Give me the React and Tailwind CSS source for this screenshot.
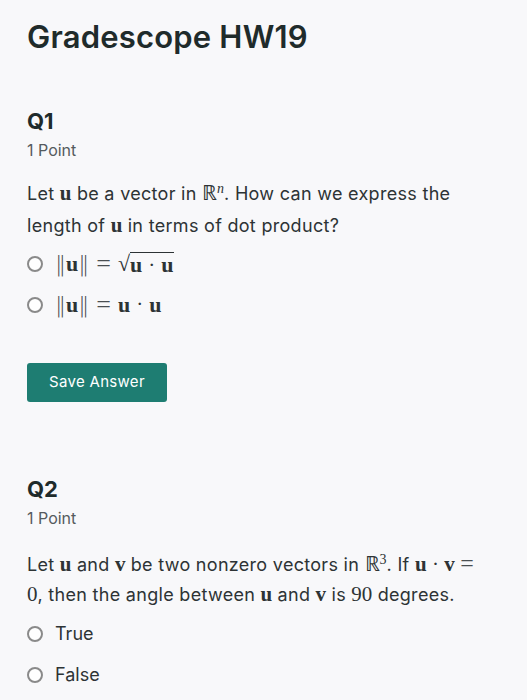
import React from 'react';

const sans = { fontFamily: 'Inter, "Open Sans", sans-serif' };

function B({ children, className = '' }) {
  return <span className={`font-['Liberation_Serif',serif] font-bold text-[21px] leading-none tracking-normal ${className}`}>{children}</span>;
}

function M({ children, className = '' }) {
  return <span className={`font-['Liberation_Serif',serif] text-[21px] leading-none tracking-normal ${className}`}>{children}</span>;
}

function Norm() {
  return (
    <span className="inline-flex items-center">
      <span className="font-['DejaVu_Sans',sans-serif] text-[22px] font-light text-[#4a4f52] leading-none">‖</span>
      <B className="text-[22px]">u</B>
      <span className="font-['DejaVu_Sans',sans-serif] text-[22px] font-light text-[#4a4f52] leading-none">‖</span>
    </span>
  );
}

function Radio({ children }) {
  return (
    <label className="flex items-center gap-[12px] h-[41px]">
      <span className="w-[16px] h-[16px] rounded-full border-2 border-[#8a8a8a] bg-white shrink-0" />
      <span className="leading-none flex items-center">{children}</span>
    </label>
  );
}

function Question({ num, children }) {
  return (
    <div>
      <h2 className="text-[22px] font-bold leading-[30px] text-[#1f2b2b]">{num}</h2>
      <p className="text-[16px] leading-[22px] text-[#555b5e] mt-[3px]">1 Point</p>
      {children}
    </div>
  );
}

export default function App() {
  return (
    <div className="min-h-[700px] bg-[#f8f8fa] px-[27px] pt-[17px] text-[#2d3335]" style={sans}>
      <h1 className="text-[31px] leading-[40px] font-semibold text-[#1f2b2b] tracking-[0.2px]">Gradescope HW19</h1>

      <div className="mt-[49px]">
        <Question num="Q1">
          <p className="mt-[17px] text-[18px] leading-[32px] tracking-[0.3px]">
            Let <B>u</B> be a vector in <M>ℝ<sup className="italic text-[14px]">n</sup></M>. How can we express the
            <br />
            length of <B>u</B> in terms of dot product?
          </p>
          <div className="mt-[1px] text-[18px]">
            <Radio>
              <Norm />
              <M className="mx-[7px] text-[26px] font-light text-[#4a4f52]">=</M>
              <M className="text-[22px]">√</M>
              <span className="border-t border-[#2d3335] pt-[1px] leading-none">
                <B className="text-[22px]">u</B>
                <M className="mx-[6px]">·</M>
                <B className="text-[22px]">u</B>
              </span>
            </Radio>
            <Radio>
              <Norm />
              <M className="mx-[7px] text-[26px] font-light text-[#4a4f52]">=</M>
              <B className="text-[22px]">u</B>
              <M className="mx-[6px]">·</M>
              <B className="text-[22px]">u</B>
            </Radio>
          </div>
          <button className="mt-[38px] w-[140px] h-[39px] rounded-[3px] bg-[#1e7d72] text-white text-[15px] tracking-[0.3px]">
            Save Answer
          </button>
        </Question>
      </div>

      <div className="mt-[72px]">
        <Question num="Q2">
          <p className="mt-[21px] text-[18px] leading-[30px] tracking-[0.3px]">
            Let <B>u</B> and <B>v</B> be two nonzero vectors in <M>ℝ<sup className="text-[14px]">3</sup></M>. If <B>u</B>{' '}
            <M>·</M> <B>v</B> <M className="text-[24px] text-[#4a4f52]">=</M>
            <br />
            <M>0</M>, then the angle between <B>u</B> and <B>v</B> is <M>90</M> degrees.
          </p>
          <div className="mt-[3px] text-[18px]">
            <Radio>True</Radio>
            <Radio>False</Radio>
          </div>
        </Question>
      </div>
    </div>
  );
}
